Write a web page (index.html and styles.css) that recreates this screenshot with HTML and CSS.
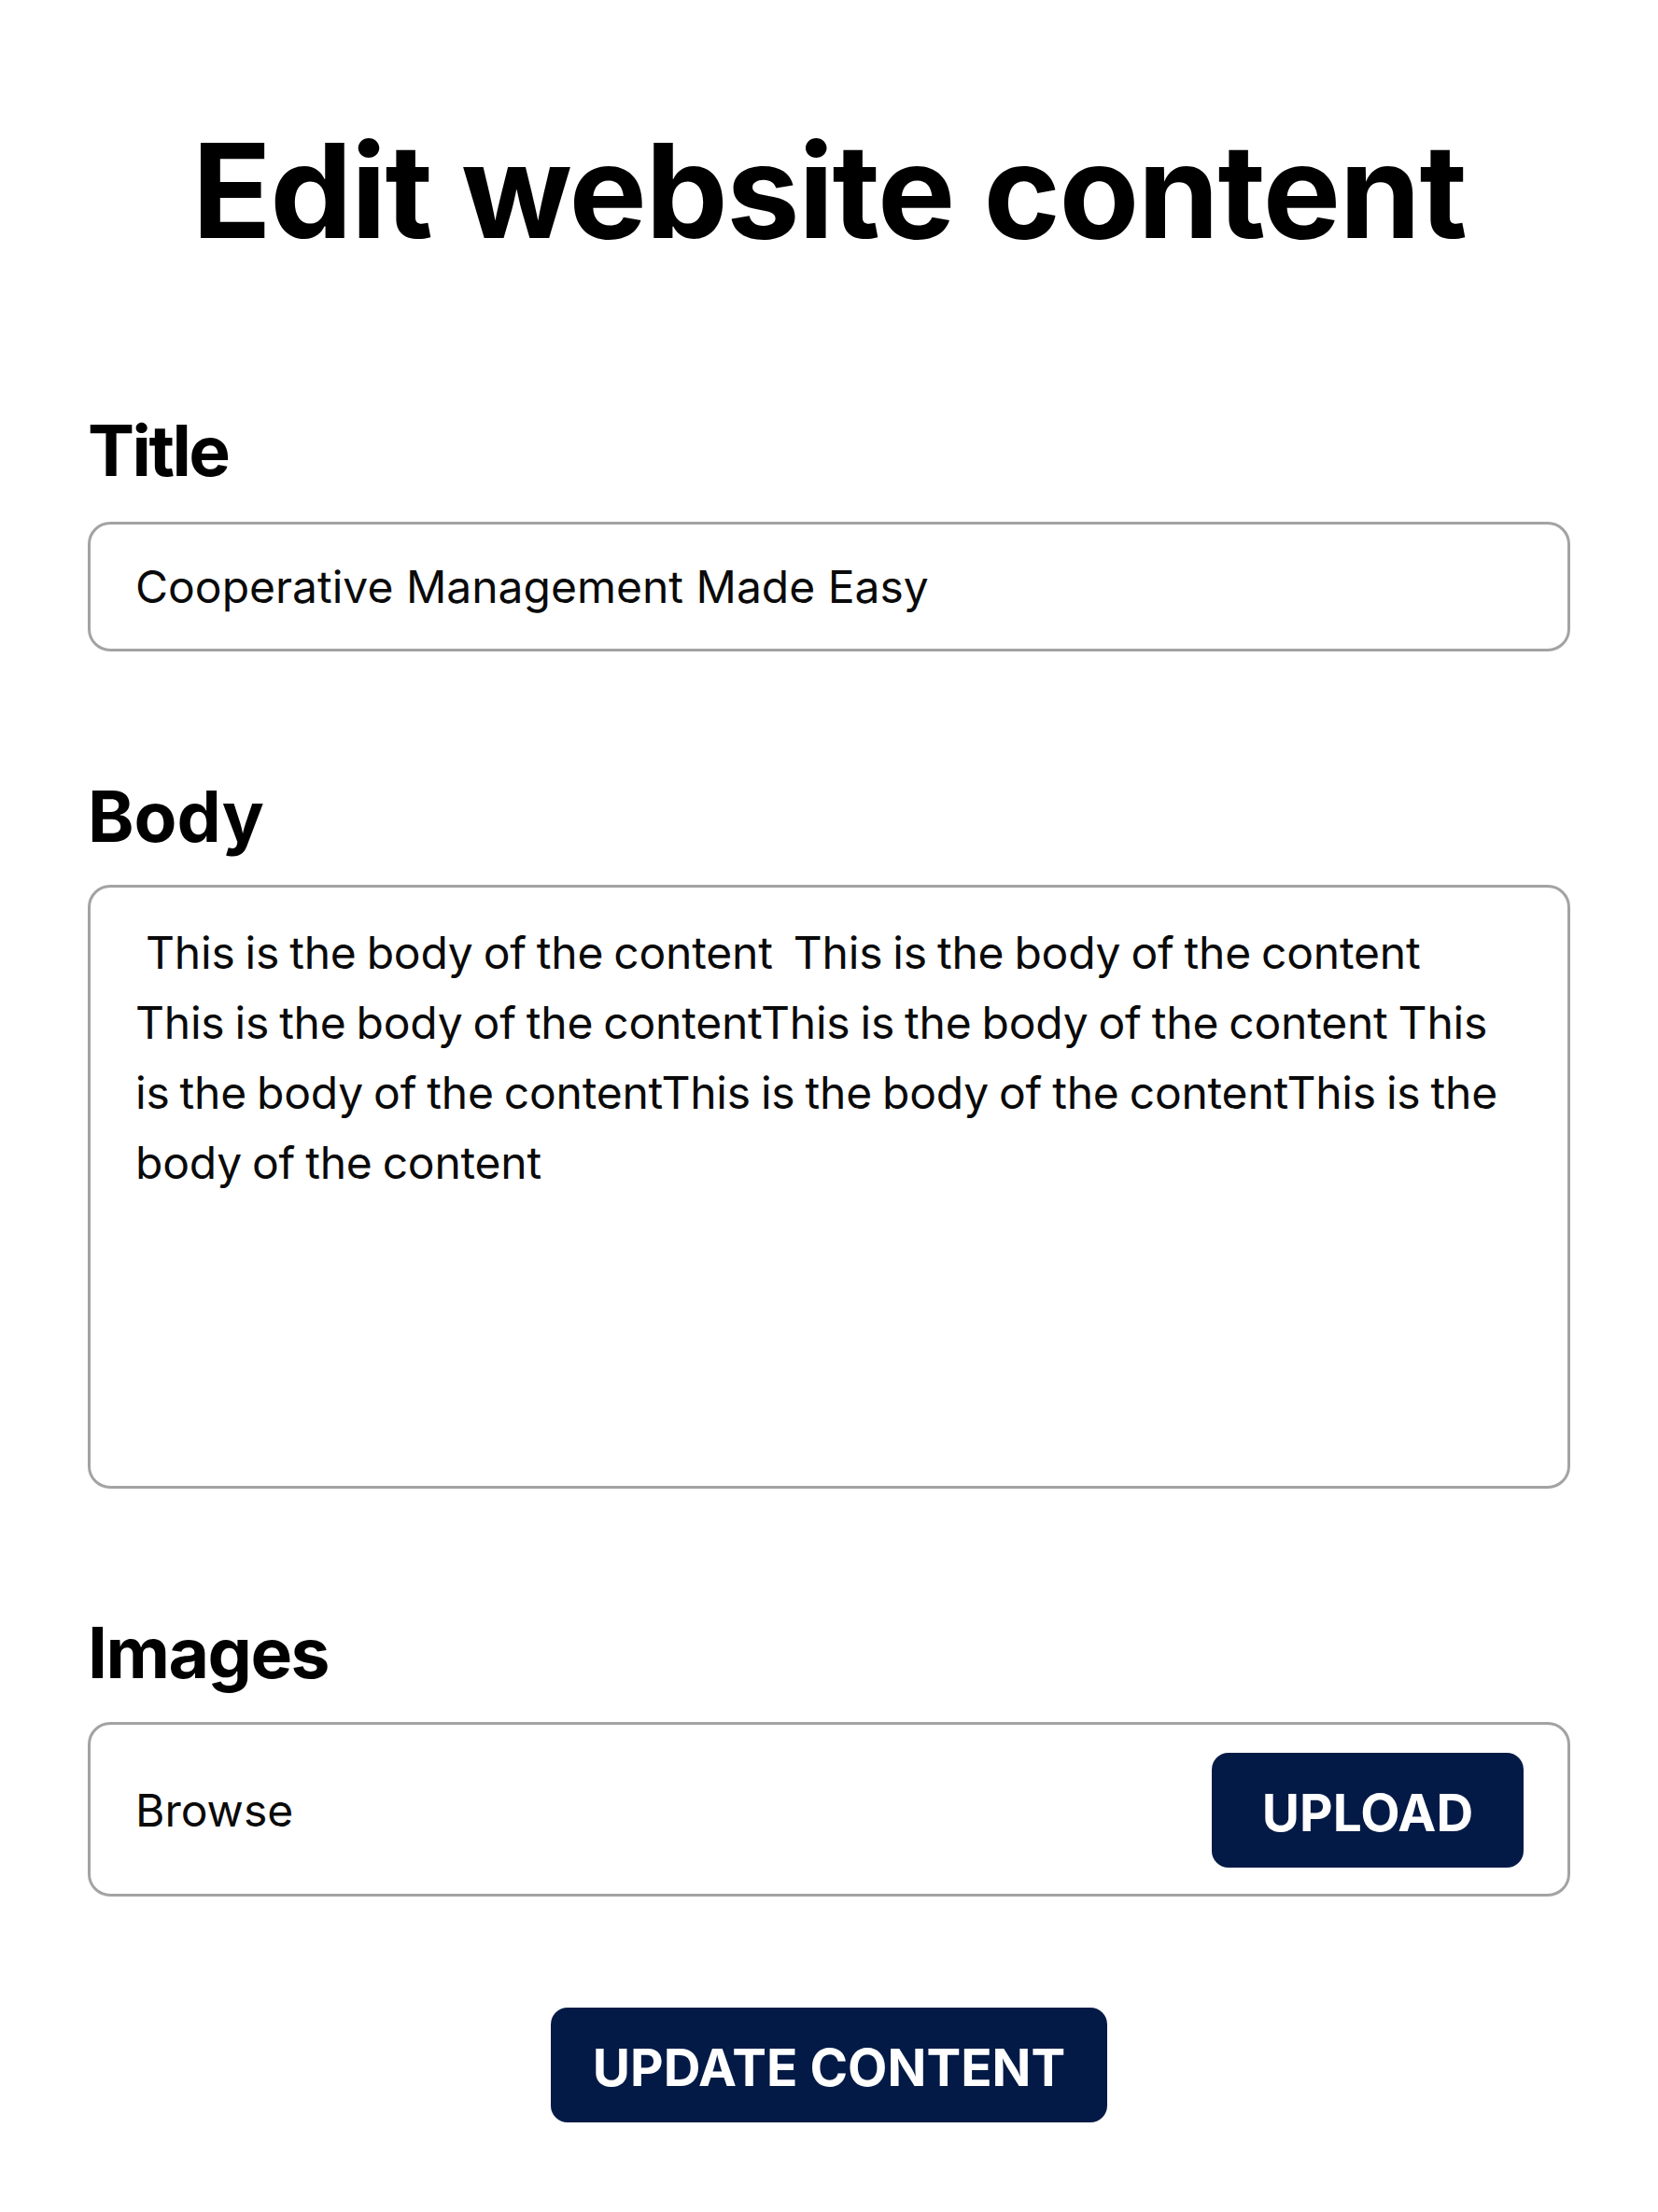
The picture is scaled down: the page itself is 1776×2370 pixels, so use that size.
FILE: index.html
```html
<!DOCTYPE html>
<html lang="en">
<head>
<meta charset="utf-8">
<title>Edit website content</title>
<link rel="stylesheet" href="styles.css">
</head>
<body>
<main class="page">
  <h1 class="heading">Edit website content</h1>
  <form class="form">
    <section class="field field-title">
      <label class="label">Title</label>
      <div class="input">Cooperative Management Made Easy</div>
    </section>
    <section class="field field-body">
      <label class="label">Body</label>
      <div class="textarea">&nbsp;This is the body of the content&nbsp; This is the body of the content<br>This is the body of the contentThis is the body of the content This<br>is the body of the contentThis is the body of the contentThis is the<br>body of the content</div>
    </section>
    <section class="field field-images">
      <label class="label">Images</label>
      <div class="file">
        <span class="browse">Browse</span>
        <button type="button" class="btn btn-upload">UPLOAD</button>
      </div>
    </section>
    <div class="actions">
      <button type="button" class="btn btn-update">UPDATE CONTENT</button>
    </div>
  </form>
</main>
</body>
</html>
```

FILE: styles.css
```css
* { box-sizing: border-box; }
html, body { margin: 0; padding: 0; background: #ffffff; }
body {
  font-family: "Inter", "Noto Sans", sans-serif;
  color: #000;
}
.page {
  width: 1776px;
  padding: 134px 94px 0;
}
.heading {
  margin: 0;
  text-align: center;
  font-size: 140px;
  line-height: 1;
  font-weight: 700;
  letter-spacing: -1.5px;
}
.form {
  display: flex;
  flex-direction: column;
}
.field { display: flex; flex-direction: column; }
.field-title { margin-top: 171px; }
.field-body { margin-top: 139px; }
.field-images { margin-top: 138px; }
.label {
  font-size: 75px;
  line-height: 1;
  font-weight: 700;
  letter-spacing: -1px;
  margin-bottom: 39px;
}
.field-title .label { letter-spacing: -2.5px; }
.field-body .label { margin-bottom: 36px; letter-spacing: 0; }
.field-images .label { margin-bottom: 37px; letter-spacing: -1.5px; }
.input {
  height: 139px;
  border: 3px solid #a3a3a3;
  border-radius: 24px;
  display: flex;
  align-items: center;
  padding: 0 48px;
  font-size: 48px;
  color: #0a0a0a;
}
.textarea {
  height: 647px;
  border: 3px solid #a3a3a3;
  border-radius: 24px;
  padding: 32px 48px;
  font-size: 48px;
  line-height: 75px;
  color: #0a0a0a;
  white-space: nowrap;
  letter-spacing: -0.22px;
  word-spacing: -2.2px;
}
.file {
  height: 187px;
  border: 3px solid #a3a3a3;
  border-radius: 24px;
  display: flex;
  align-items: center;
  justify-content: space-between;
  padding: 2px 47px 0 48px;
}
.browse {
  font-size: 48px;
  color: #0a0a0a;
}
.btn {
  border: none;
  background: #041a46;
  color: #fff;
  font-family: "Inter", "Noto Sans", sans-serif;
  font-weight: 700;
  font-size: 55px;
  height: 123px;
  border-radius: 18px;
  cursor: pointer;
  padding: 4px 0 0;
}
.btn-upload { width: 334px; }
.actions {
  display: flex;
  justify-content: center;
  margin-top: 119px;
}
.btn-update { width: 596px; }
```
